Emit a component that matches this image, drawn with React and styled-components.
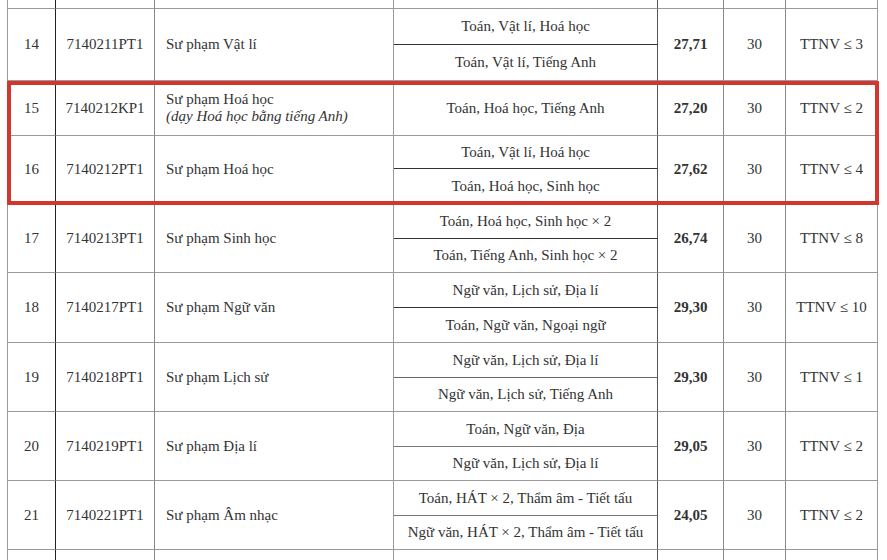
import React from 'react';
import styled, { createGlobalStyle } from 'styled-components';

const Global = createGlobalStyle`
  html, body { margin: 0; padding: 0; background: #fff; }
  body { font-family: "Liberation Serif", "Times New Roman", serif; }
`;

const COLS = '48px 99px 239px 264px 66px 62px 92px';
const COL_LINES = ['#222', '#888', '#9a9a9a', '#555', '#888', '#888', '#9a9a9a'];
const ROW_LINE = '#9a9a9a';

const Sheet = styled.div`
  position: relative;
  width: 887px;
  height: 560px;
  overflow: hidden;
  background: #fff;
  padding-left: 7px;
  box-sizing: border-box;
`;

const Table = styled.div`
  display: flex;
  flex-direction: column;
  width: 871px;
  border-left: 1px solid #9a9a9a;
`;

const Row = styled.div`
  display: grid;
  grid-template-columns: ${COLS};
  grid-template-rows: ${(p) => p.$rows};
`;

const Cell = styled.div`
  grid-row: 1 / -1;
  grid-column: ${(p) => p.$col};
  box-sizing: border-box;
  min-width: 0;
  border-right: 1px solid ${(p) => COL_LINES[p.$col - 1]};
  border-bottom: ${(p) => (p.$open ? 'none' : `1px solid ${ROW_LINE}`)};
  display: flex;
  align-items: center;
  justify-content: center;
  font-size: 15px;
  line-height: 17px;
  color: #333;
  font-weight: ${(p) => (p.$bold ? 700 : 400)};
  white-space: nowrap;
`;

const NameCell = styled(Cell)`
  flex-direction: column;
  align-items: flex-start;
  justify-content: center;
  padding-left: 11px;
`;

const Note = styled.span`
  font-style: italic;
`;

const Combo = styled.div`
  grid-column: 4;
  box-sizing: border-box;
  min-width: 0;
  border-right: 1px solid ${COL_LINES[3]};
  border-bottom: 1px solid ${(p) => p.$line};
  display: flex;
  align-items: center;
  justify-content: center;
  font-size: 15px;
  line-height: 17px;
  color: #333;
  white-space: nowrap;
`;

const Highlight = styled.div`
  position: absolute;
  left: 7px;
  top: 81px;
  width: 872px;
  height: 124px;
  border: 4px solid #d3362f;
  box-sizing: border-box;
  pointer-events: none;
`;

const programs = [
  { no: 14, code: '7140211PT1', name: 'Sư phạm Vật lí', combos: ['Toán, Vật lí, Hoá học', 'Toán, Vật lí, Tiếng Anh'], score: '27,71', cond: 'TTNV ≤ 3', rows: '36px 36px', sub: '#333' },
  { no: 15, code: '7140212KP1', name: 'Sư phạm Hoá học', note: '(dạy Hoá học bằng tiếng Anh)', combos: ['Toán, Hoá học, Tiếng Anh'], score: '27,20', cond: 'TTNV ≤ 2', rows: '55px', sub: '#333' },
  { no: 16, code: '7140212PT1', name: 'Sư phạm Hoá học', combos: ['Toán, Vật lí, Hoá học', 'Toán, Hoá học, Sinh học'], score: '27,62', cond: 'TTNV ≤ 4', rows: '33px 35px', sub: '#333' },
  { no: 17, code: '7140213PT1', name: 'Sư phạm Sinh học', combos: ['Toán, Hoá học, Sinh học × 2', 'Toán, Tiếng Anh, Sinh học × 2'], score: '26,74', cond: 'TTNV ≤ 8', rows: '35px 34px', sub: '#333' },
  { no: 18, code: '7140217PT1', name: 'Sư phạm Ngữ văn', combos: ['Ngữ văn, Lịch sử, Địa lí', 'Toán, Ngữ văn, Ngoại ngữ'], score: '29,30', cond: 'TTNV ≤ 10', rows: '35px 35px', sub: '#333' },
  { no: 19, code: '7140218PT1', name: 'Sư phạm Lịch sử', combos: ['Ngữ văn, Lịch sử, Địa lí', 'Ngữ văn, Lịch sử, Tiếng Anh'], score: '29,30', cond: 'TTNV ≤ 1', rows: '35px 34px', sub: '#666' },
  { no: 20, code: '7140219PT1', name: 'Sư phạm Địa lí', combos: ['Toán, Ngữ văn, Địa', 'Ngữ văn, Lịch sử, Địa lí'], score: '29,05', cond: 'TTNV ≤ 2', rows: '35px 34px', sub: '#777' },
  { no: 21, code: '7140221PT1', name: 'Sư phạm Âm nhạc', combos: ['Toán, HÁT × 2, Thẩm âm - Tiết tấu', 'Ngữ văn, HÁT × 2, Thẩm âm - Tiết tấu'], score: '24,05', cond: 'TTNV ≤ 2', rows: '35px 34px', sub: '#777' },
];

function Spacer({ height, open }) {
  return (
    <Row $rows={height}>
      {[1, 2, 3, 4, 5, 6, 7].map((c) => (
        <Cell key={c} $col={c} $open={open} />
      ))}
    </Row>
  );
}

export default function App() {
  return (
    <>
      <Global />
      <Sheet>
        <Table>
          <Spacer height="9px" />
          {programs.map((p) => (
            <Row key={p.no} $rows={p.rows}>
              <Cell $col={1}>{p.no}</Cell>
              <Cell $col={2}>{p.code}</Cell>
              <NameCell $col={3}>
                <span>{p.name}</span>
                {p.note && <Note>{p.note}</Note>}
              </NameCell>
              {p.combos.map((c, i) => (
                <Combo key={c} $line={i < p.combos.length - 1 ? p.sub : ROW_LINE}>
                  {c}
                </Combo>
              ))}
              <Cell $col={5} $bold>{p.score}</Cell>
              <Cell $col={6}>30</Cell>
              <Cell $col={7}>{p.cond}</Cell>
            </Row>
          ))}
          <Spacer height="30px" open />
        </Table>
        <Highlight />
      </Sheet>
    </>
  );
}
